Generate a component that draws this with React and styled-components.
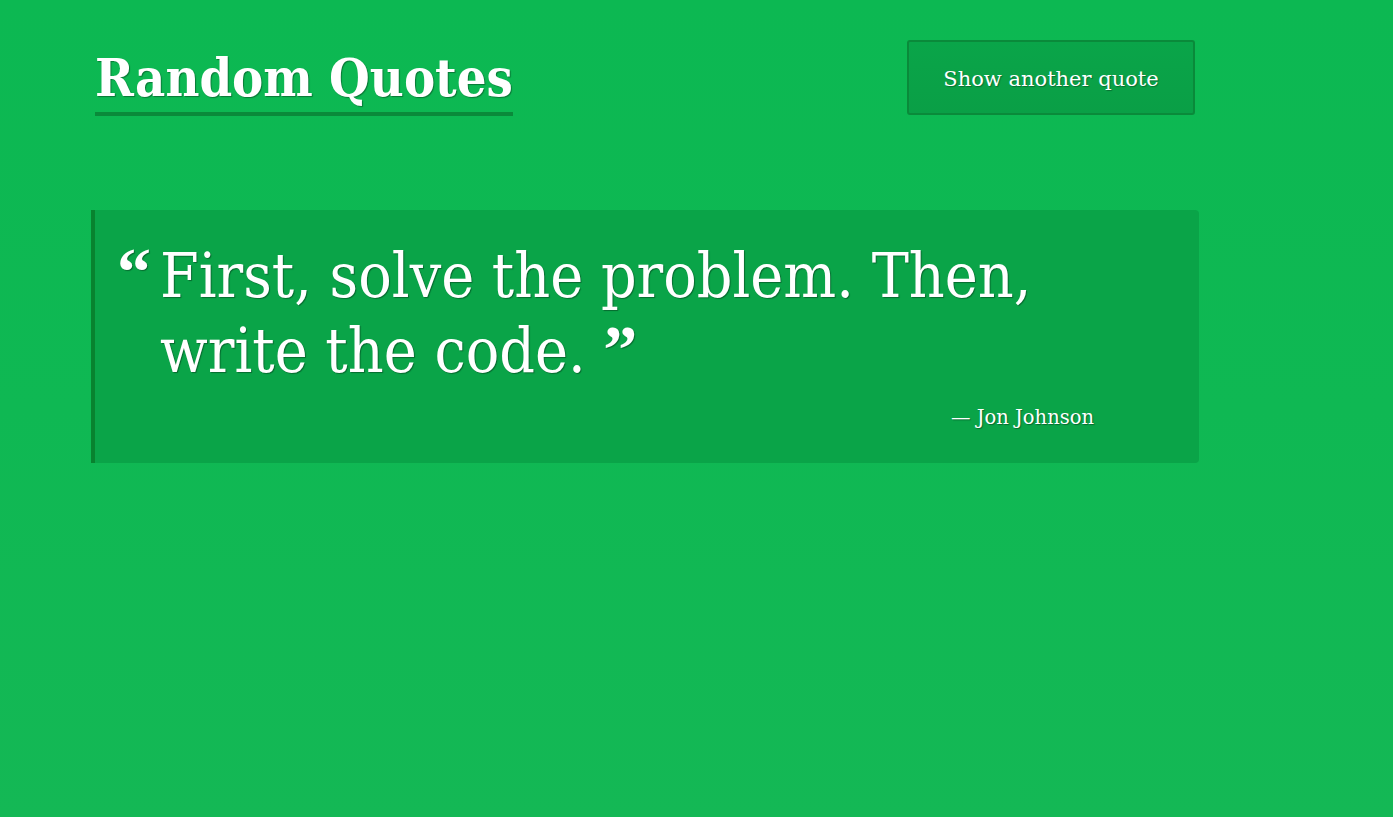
import React from "react";
import styled, { createGlobalStyle } from "styled-components";

const Global = createGlobalStyle`
  html, body { margin: 0; padding: 0; }
  body {
    min-height: 817px;
    background: linear-gradient(180deg, #0cb852 0%, #0fb853 50%, #14b855 100%);
    font-family: "DejaVu Serif", "Liberation Serif", serif;
    color: #fff;
  }
`;

const Page = styled.div`
  min-height: 817px;
  padding: 40px 0 0 91px;
  box-sizing: border-box;
`;

const Container = styled.div`
  width: 1108px;
`;

const Header = styled.header`
  display: flex;
  justify-content: space-between;
  align-items: flex-start;
  padding: 0 4px;
`;

const Title = styled.h1`
  margin: 0;
  font-family: "DejaVu Serif Condensed", "DejaVu Serif", serif;
  font-size: 52px;
  font-weight: 700;
  line-height: 69px;
  padding-top: 3px;
  border-bottom: 4px solid #0a8a3a;
  text-shadow: 1px 1px 1px rgba(0, 0, 0, 0.35);
`;

const Button = styled.button`
  width: 288px;
  height: 75px;
  box-sizing: border-box;
  background: linear-gradient(180deg, #0aa549, #0a9f46);
  border: 2px solid #0a8a3a;
  border-radius: 3px;
  color: #fff;
  font-family: inherit;
  font-size: 21px;
  padding-top: 3px;
  text-shadow: 1px 1px 1px rgba(0, 0, 0, 0.3);
  cursor: pointer;
`;

const QuoteBox = styled.blockquote`
  margin: 94px 0 0;
  background: #0aa448;
  border-left: 4px solid #08832f;
  border-radius: 0 4px 4px 0;
  padding: 28px 105px 0 22px;
  height: 253px;
  box-sizing: border-box;
`;

const QuoteText = styled.p`
  margin: 0;
  display: flex;
  font-family: "DejaVu Serif Condensed", "DejaVu Serif", serif;
  font-size: 62px;
  line-height: 75px;
  text-shadow: 1px 1px 1px rgba(0, 0, 0, 0.35);
`;

const Mark = styled.span`
  font-family: "Liberation Serif", serif;
  font-weight: 700;
  font-size: 68px;
  line-height: 0;
  position: relative;
  top: ${(p) => p.$shift || 0}px;
`;

const OpenCol = styled.span`
  flex: none;
  width: 43px;
`;

const Author = styled.cite`
  display: block;
  text-align: right;
  font-style: normal;
  font-size: 19.5px;
  line-height: 24px;
  margin-top: 18px;
  text-shadow: 1px 1px 1px rgba(0, 0, 0, 0.35);
`;

export default function App() {
  return (
    <>
      <Global />
      <Page>
        <Container>
          <Header>
            <Title>Random Quotes</Title>
            <Button>Show another quote</Button>
          </Header>
          <QuoteBox>
            <QuoteText>
              <OpenCol>
                <Mark $shift={-2}>“</Mark>
              </OpenCol>
              <span>
                First, solve the problem. Then, write the code.{" "}
                <Mark $shift={0}>”</Mark>
              </span>
            </QuoteText>
            <Author>— Jon Johnson</Author>
          </QuoteBox>
        </Container>
      </Page>
    </>
  );
}
